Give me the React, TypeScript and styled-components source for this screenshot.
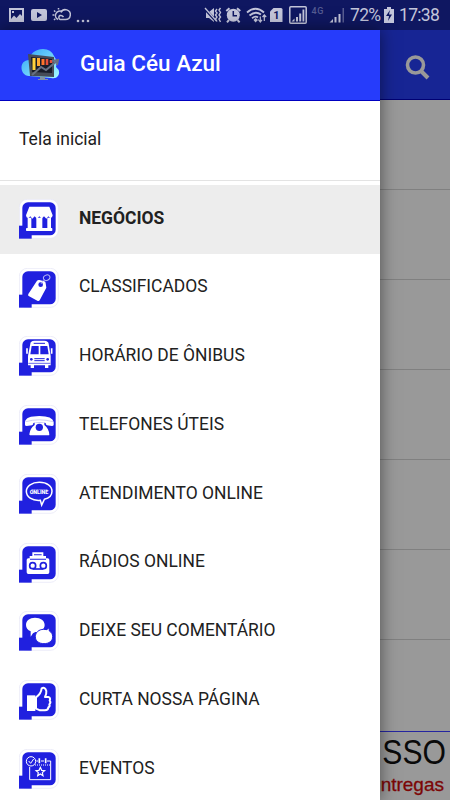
import type { ReactNode } from 'react';
import styled, { createGlobalStyle } from 'styled-components';

const BLUE = '#2020df';

const GlobalStyle = createGlobalStyle`
  * {
    box-sizing: border-box;
  }

  body {
    margin: 0;
    font-family: Roboto, 'Liberation Sans', sans-serif;
  }
`;

const Screen = styled.div`
  width: 450px;
  height: 800px;
  display: flex;
  flex-direction: column;
  overflow: hidden;
  background: #999;
`;

const StatusBar = styled.header`
  flex: none;
  height: 30px;
  display: flex;
  align-items: center;
  justify-content: space-between;
  background: #0f1761;
  color: #c3c5da;
  padding: 0 10px 0 9px;
`;

const StatusGroup = styled.div`
  display: flex;
  align-items: center;

  svg {
    display: block;
    flex: none;
  }
`;

const Notifications = styled.svg`
  width: 82px;
  height: 30px;
`;

const Indicators = styled.svg`
  width: 146px;
  height: 30px;
`;

const StatusText = styled.span<{ $width: number }>`
  width: ${({ $width }) => $width}px;
  font-size: 17.5px;
  letter-spacing: -0.7px;
  line-height: 31px;
  white-space: nowrap;
`;

const Battery = styled.svg`
  width: 10px;
  height: 30px;
  margin-right: 5px;
`;

const Body = styled.div`
  flex: 1;
  min-height: 0;
  display: flex;
`;

const Drawer = styled.nav`
  position: relative;
  z-index: 1;
  flex: none;
  width: 380px;
  background: #fff;
  box-shadow: 0 0 16px rgba(0, 0, 0, 0.5);
`;

const DrawerHeader = styled.div`
  height: 71px;
  display: flex;
  align-items: center;
  padding: 0 21px 2px;
  background: #263cfb;
  border-bottom: 1px solid #0000c0;
`;

const Logo = styled.svg`
  width: 39px;
  height: 34px;
  margin-right: 20px;
`;

const AppTitle = styled.h1`
  margin: 0;
  padding-bottom: 2px;
  color: #fff;
  font-size: 22.5px;
  font-weight: 500;
  line-height: 30px;
  white-space: nowrap;
`;

const HomeLink = styled.div`
  height: 80px;
  padding: 23px 19px;
  border-bottom: 1px solid #e3e3e3;
  color: #212121;
  font-size: 17.5px;
  line-height: 30px;
`;

const Menu = styled.ul`
  list-style: none;
  margin: 4px 0 0;
  padding: 0;
`;

const MenuItem = styled.li<{ $active?: boolean }>`
  height: 68.75px;
  display: flex;
  align-items: center;
  gap: 20px;
  padding: 0 19px 1px;
  background: ${({ $active }) => ($active ? '#ededed' : 'transparent')};
  color: #212121;
  font-size: 17.45px;
  font-weight: ${({ $active }) => ($active ? 700 : 400)};
`;

const MenuLabel = styled.span`
  white-space: nowrap;
  line-height: 24px;
  padding-bottom: 2.4px;
`;

const IconFrame = styled.svg`
  flex: none;
  width: 40px;
  height: 40px;
`;

const Page = styled.main`
  flex: 1;
  min-width: 0;
  display: flex;
  flex-direction: column;
  overflow: hidden;
`;

const PageHeader = styled.div`
  flex: none;
  height: 70px;
  display: flex;
  align-items: center;
  justify-content: flex-end;
  padding: 4px 20px 0 0;
  background: #172594;
  border-bottom: 1px solid #000073;
`;

const PageRow = styled.div`
  flex: none;
  height: 90px;
  border-bottom: 1px solid #808080;
`;

const Banner = styled.div`
  flex: 1;
  margin-top: 91px;
  border-top: 1px solid #2525a0;
  display: flex;
  flex-direction: column;
  align-items: flex-end;
  font-family: 'Liberation Sans', sans-serif;
  white-space: nowrap;
`;

const BannerTitle = styled.div`
  margin-right: 4px;
  color: #0a0a0a;
  font-size: 35px;
  line-height: 40px;
  transform: scaleX(0.86);
  transform-origin: right;
`;

const BannerText = styled.div`
  padding-right: 6px;
  color: #7c0606;
  -webkit-text-stroke: 0.3px #7c0606;
  font-size: 19px;
  line-height: 25px;
`;

const TileIcon = ({ children }: { children: ReactNode }) => (
  <IconFrame viewBox="0 0 120 120">
    <rect x="1" y="1" width="117" height="117" rx="24" fill="#fff" stroke="#e4e4f6" strokeWidth="2" />
    <rect x="10" y="10" width="100" height="99" rx="17" fill={BLUE} />
    <path d="M0 80H38V119H0Z" fill={BLUE} />
    {children}
  </IconFrame>
);

const shop = (
  <g fill="#fff">
    <path d="M31 23H91L101 49Q100 57 94 58L88 52L82 59L75 52L68 59L61 52L54 59L47 52L40 59L34 52L28 58Q21 56 21 49Z" />
    <path d="M26 56H37V88H26ZM52 56H70V88H52ZM85 56H96V88H85Z" />
    <rect x="21" y="87" width="79" height="9" rx="2" />
  </g>
);

const tag = (
  <>
    <path d="M54 38Q57 35 61 36L76 40Q80 42 80 46L82 59L62 97Q59 100 55 98L29 84Q26 82 28 78Z" fill="#fff" />
    <circle cx="65" cy="50" r="7" fill={BLUE} />
    <ellipse cx="83" cy="29" rx="10" ry="8" transform="rotate(-30 83 29)" fill="none" stroke="#b9b9f2" strokeWidth="3" />
    <path d="M75 34L66 48" stroke="#b9b9f2" strokeWidth="2" />
  </>
);

const bus = (
  <>
    <path d="M34 23Q34 15 46 14H76Q88 15 89 23L95 60V88H88V96H78V88H45V96H35V88H27V60Z" fill="#fff" />
    <path d="M24 37V53M98 37V53" stroke="#fff" strokeWidth="5" />
    <path d="M38 30H59V55H34ZM64 30H85L89 55H64Z" fill={BLUE} />
    <path d="M44 22H78M46 68H77M46 74H77" stroke={BLUE} strokeWidth="3" />
    <circle cx="37" cy="70" r="4" fill={BLUE} />
    <circle cx="86" cy="70" r="4" fill={BLUE} />
    <path d="M28 82H94" stroke={BLUE} strokeWidth="2" />
  </>
);

const phone = (
  <>
    <path d="M18 51Q20 33 61 33Q101 33 104 51V60Q103 63 99 63L84 61Q80 60 80 54Q62 48 43 54Q43 60 39 61L23 63Q18 63 18 59Z" fill="#fff" />
    <path d="M47 52H76V60Q90 71 91 89Q91 91 88 91H34Q31 91 31 88Q33 70 47 60Z" fill="#fff" />
    <path d="M20 50Q60 39 102 50" fill="none" stroke="#b8b8ee" strokeWidth="2" />
    <circle cx="61" cy="67" r="11" fill={BLUE} />
  </>
);

const online = (
  <>
    <path d="M61 25C84 25 99 36 99 52C99 64 90 73 76 76L68 93L64 79C39 81 22 69 22 52C22 36 39 25 61 25Z" fill="none" stroke="#fff" strokeWidth="4.5" />
    <text x="61" y="47" textAnchor="middle" fontSize="7.5" fill="#c9c9f7" textLength="48" lengthAdjust="spacingAndGlyphs">ATENDIMENTO</text>
    <text x="60" y="61" textAnchor="middle" fontSize="17" fontWeight="900" fill="#fff" textLength="56" lengthAdjust="spacingAndGlyphs">ONLINE</text>
  </>
);

const radio = (
  <>
    <path d="M40 28H73V39H81V46H86Q91 46 91 51V88Q91 93 86 93H28Q23 93 23 88V51Q23 46 28 46H32V39H40Z" fill="#fff" />
    <path d="M45 34H68V37H45ZM33 47H81V50H33Z" fill={BLUE} />
    <g fill="none" stroke={BLUE} strokeWidth="5">
      <circle cx="41" cy="68" r="9" />
      <circle cx="73" cy="68" r="9" />
      <path d="M41 78H73" />
    </g>
  </>
);

const chat = (
  <g fill="#fff">
    <path d="M48 20C65 20 77 29 77 42C77 55 64 63 49 63L42 67L35 77L35 61C26 57 21 50 21 42C21 29 32 20 48 20Z" />
    <path d="M74 55L84 56L90 50L91 60C98 64 101 70 101 77C101 90 90 98 75 98C60 98 49 90 49 77C49 65 59 55 74 55Z" stroke={BLUE} strokeWidth="3" />
  </g>
);

const thumb = (
  <>
    <path d="M24 46H49V93H24Z" fill="#fff" />
    <path d="M51 52Q66 42 68 25Q78 20 82 33Q83 40 78 51H88Q96 53 92 62Q97 67 91 73Q94 79 88 82Q88 91 78 91H63L51 86Z" fill={BLUE} stroke="#fff" strokeWidth="6" strokeLinejoin="round" />
  </>
);

const events = (
  <g fill="none" stroke="#fff" strokeWidth="3">
    <circle cx="36" cy="37" r="14" />
    <path d="M29 36L35 43L44 30M52 36H57M66 36H75M84 36H95V92H32V54" />
    <path d="M61 28V43M80 28V43" strokeWidth="5" />
    <path d="M48 48H95" strokeDasharray="3 3" />
    <path d="M64 55L68 64L77 65L70 71L72 80L64 75L56 80L58 71L51 65L60 64Z" strokeWidth="3.5" />
  </g>
);

const menuItems = [
  { label: 'NEGÓCIOS', icon: shop, active: true },
  { label: 'CLASSIFICADOS', icon: tag },
  { label: 'HORÁRIO DE ÔNIBUS', icon: bus },
  { label: 'TELEFONES ÚTEIS', icon: phone },
  { label: 'ATENDIMENTO ONLINE', icon: online },
  { label: 'RÁDIOS ONLINE', icon: radio },
  { label: 'DEIXE SEU COMENTÁRIO', icon: chat },
  { label: 'CURTA NOSSA PÁGINA', icon: thumb },
  { label: 'EVENTOS', icon: events },
];

const NotificationIcons = () => (
  <Notifications viewBox="9 0 82 30" fill="currentColor">
    <path fillRule="evenodd" d="M9 8H24V22H9ZM11 10V19L14 15.5L16.5 18L20 14L22 16V10ZM12 11H14V13H12Z" />
    <path fillRule="evenodd" d="M33 9H45Q47 9 47 11V19Q47 21 45 21H33Q31 21 31 19V11Q31 9 33 9ZM37 12V18L42 15Z" />
    <g fill="none" stroke="currentColor" strokeWidth="1.5">
      <path d="M58 19.5A4 4 0 1 1 62 11.5M60 19.5H65.5A4.9 4.9 0 1 0 61 12.5M60 19.5A2.3 2.3 0 0 1 60 15.5Q62 15 63.5 17" />
      <path d="M58.5 8V9.5M54 10.5L55.3 11.8M52.5 15H54.5M54 20L55.3 18.7" />
    </g>
    <circle cx="78" cy="21" r="1.3" />
    <circle cx="83" cy="21" r="1.3" />
    <circle cx="88" cy="21" r="1.3" />
  </Notifications>
);

const IndicatorIcons = () => (
  <Indicators viewBox="204 0 146 30" fill="currentColor">
    <path d="M206 12H209L214 8V22L209 18H206Z" />
    <path d="M205 9L216 21" stroke="#0f1761" strokeWidth="2.6" />
    <path d="M205 8L216.5 21" stroke="currentColor" strokeWidth="1.3" />
    <path d="M217 9L215.5 11L217 13L215.5 15L217 17L215.5 19L217 21.5M220.5 8L219 10L220.5 12.5L219 15L220.5 17L219 19L220.5 22" fill="none" stroke="currentColor" strokeWidth="1.4" />
    <circle cx="233.3" cy="15.2" r="6.5" />
    <path d="M226.3 11L229.5 8.2M240.3 11L237 8.2M229 20L227 22.3M237.5 20L239.6 22.3" stroke="currentColor" strokeWidth="2" />
    <path d="M233.3 11V15.7H237" fill="none" stroke="#0f1761" strokeWidth="1.5" />
    <g fill="none" stroke="currentColor" strokeWidth="1.8">
      <path d="M247 12.5Q255.5 5 264 12.5M249.5 15.5Q255.5 10.5 261 14.5M252 18.3Q255.5 15.5 258 17.5" />
      <path d="M260.3 22V16.5M258.3 19.5L260.3 22L262 19.8M264.3 15V21M262.5 17L264.3 15L266.2 17" strokeWidth="1.2" />
    </g>
    <path d="M255.5 18L258 20L255.5 22.5L253.5 20Z" />
    <path d="M273.5 8H281Q282.5 8 282.5 9.5V22H270V11.5Z" />
    <text x="276.3" y="19.3" textAnchor="middle" fontSize="11" fontWeight="700" fill="#0f1761">1</text>
    <rect x="289.8" y="6.8" width="16.4" height="16.4" rx="1" fill="none" stroke="currentColor" strokeWidth="1.5" />
    <path d="M291.5 21.5L294.5 18.5V21.5ZM296 17H298V21.5H296ZM299.2 13.5H301.2V21.5H299.2ZM302.5 9.5H304.3V21.5H302.5Z" />
    <text x="311.5" y="14.3" fontSize="9" fontWeight="500" fill="#555b91" textLength="12">4G</text>
    <path d="M329.5 22.5L333 19V22.5ZM334.5 17H336.5V22.5H334.5ZM338.5 14H340.5V22.5H338.5Z" />
    <path d="M342.5 8H344V22.5H342.5Z" opacity="0.4" />
  </Indicators>
);

const App = () => (
  <Screen>
    <GlobalStyle />
    <StatusBar>
      <StatusGroup>
        <NotificationIcons />
      </StatusGroup>
      <StatusGroup>
        <IndicatorIcons />
        <StatusText $width={34}>72%</StatusText>
        <Battery viewBox="0 0 10 30">
          <path d="M3 7H7V9H10V23H0V9H3Z" fill="#c3c5da" />
          <path d="M6 10L2 16H5L4 21L8 14.5H5Z" fill="#0f1761" />
        </Battery>
        <StatusText $width={41}>17:38</StatusText>
      </StatusGroup>
    </StatusBar>
    <Body>
      <Drawer>
        <DrawerHeader>
          <Logo viewBox="0 0 39 34">
            <defs>
              <linearGradient id="cloud" x2="1" y2="1">
                <stop offset="0" stopColor="#2ea2f5" />
                <stop offset="1" stopColor="#a6fbff" />
              </linearGradient>
            </defs>
            <path d="M8 29C-2 28 -2 13 8 13C9 7 14 2 22 2Q30 2 33 9L36 14L35 20Q40 24 37 29Q35 32 30 31L8 29Z" fill="url(#cloud)" />
            <path d="M7 7L33 10V30L9 29Z" fill="#464c58" />
            <path d="M10 10L31 12V26L11 25Z" fill="#181c29" />
            <path d="M13 11V23" stroke="#ffd33d" strokeWidth="3" />
            <path d="M17.5 11V19" stroke="#ffad32" strokeWidth="3" />
            <path d="M22 12V18" stroke="#ff742b" strokeWidth="3" />
            <path d="M26 12V18M30 13V16" stroke="#e84e39" strokeWidth="2.6" />
            <path d="M11 28L20 20L25 23L36 14M31 14L37 13L36 18" fill="none" stroke="#687184" strokeWidth="2" />
            <path d="M19 30H24V32H27V33H17V32H19Z" fill="#8392a3" />
          </Logo>
          <AppTitle>Guia Céu Azul</AppTitle>
        </DrawerHeader>
        <HomeLink>Tela inicial</HomeLink>
        <Menu>
          {menuItems.map((item) => (
            <MenuItem key={item.label} $active={item.active}>
              <TileIcon>{item.icon}</TileIcon>
              <MenuLabel>{item.label}</MenuLabel>
            </MenuItem>
          ))}
        </Menu>
      </Drawer>
      <Page>
        <PageHeader>
          <svg width="26" height="26" viewBox="0 0 26 26" fill="none" stroke="#999">
            <circle cx="11.5" cy="11" r="8" strokeWidth="3.6" />
            <path d="M17 17L24 24" strokeWidth="4" />
          </svg>
        </PageHeader>
        {[1, 2, 3, 4, 5, 6].map((row) => (
          <PageRow key={row} />
        ))}
        <Banner>
          <BannerTitle>SSO</BannerTitle>
          <BannerText>ntregas</BannerText>
        </Banner>
      </Page>
    </Body>
  </Screen>
);

export default App;
